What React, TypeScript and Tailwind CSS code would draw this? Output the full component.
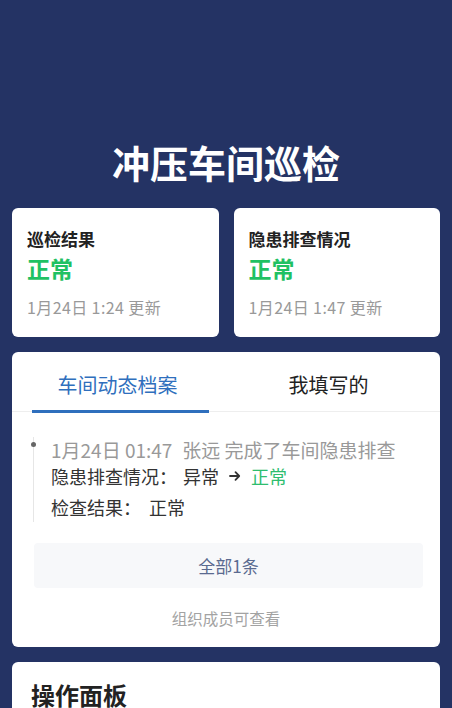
import React from 'react';

// 冲压车间巡检 — inspection overview page
const font = "font-['Noto_Sans_CJK_SC','Noto_Sans',sans-serif]";

function StatusCard({ title, time }: { title: string; time: string }) {
  return (
    <div className="h-[129px] rounded-[6px] bg-white pl-[15px] pt-[19px]">
      <div className="text-[17px] font-bold leading-[24px] text-[#222]">{title}</div>
      <div className="mt-[2px] text-[23px] font-bold leading-[30px] text-[#1fc163]">正常</div>
      <div className="mt-[12px] text-[16px] leading-[24px] tracking-[0.4px] text-[#999]">
        {time} 更新
      </div>
    </div>
  );
}

function Arrow() {
  return (
    <svg width="12" height="12" viewBox="0 0 12 12" className="mx-[10px] inline-block">
      <path d="M1 6h9M6.5 2.2 10.2 6 6.5 9.8" fill="none" stroke="#333" strokeWidth="1.8" strokeLinecap="round" strokeLinejoin="round" />
    </svg>
  );
}

export default function App() {
  return (
    <div className={`min-h-screen bg-[#243364] ${font}`}>
      <h1 className="pt-[140px] text-center text-[38px] font-bold leading-[44px] text-white">
        冲压车间巡检
      </h1>

      <div className="mt-[24px] grid grid-cols-2 gap-[15px] px-3">
        <StatusCard title="巡检结果" time="1月24日 1:24" />
        <StatusCard title="隐患排查情况" time="1月24日 1:47" />
      </div>

      <div className="mx-3 mt-[15px] h-[295px] rounded-[6px] bg-white">
        <div className="flex h-[60px] border-b border-[#eeeeee]">
          <div className="relative flex-1 pt-[19px] text-center text-[20px] leading-[28px] text-[#2f6fbd]">
            车间动态档案
            <div className="absolute bottom-[-2px] left-[20px] right-[14px] h-[3px] bg-[#2f6fbd]" />
          </div>
          <div className="flex-1 pt-[19px] pr-[6px] text-center text-[20px] leading-[28px] text-[#222]">
            我填写的
          </div>
        </div>

        <div className="pl-[21px] pt-[25px]">
          <div className="relative border-l border-[#e6e6e6] pb-[2px] pl-[17px]">
            <div className="absolute left-[-3px] top-[5px] h-[5px] w-[5px] rounded-full bg-[#666]" />
            <div className="text-[19px] leading-[26px] text-[#999]">
              1月24日 01:47<span className="ml-[10px]">张远 完成了车间隐患排查</span>
            </div>
            <div className="flex items-center text-[18px] leading-[26px] text-[#333]">
              <span>隐患排查情况：</span>
              <span className="ml-[6px]">异常</span>
              <Arrow />
              <span className="text-[#2ebd6e]">正常</span>
            </div>
            <div className="mt-[5px] text-[18px] leading-[26px] text-[#333]">
              检查结果：<span className="ml-[8px]">正常</span>
            </div>
          </div>
        </div>

        <div className="ml-[22px] mr-[17px] mt-[21px] flex h-[45px] items-center justify-center rounded-[4px] bg-[#f7f8fa] text-[17px] text-[#5a6a90]">
          全部1条
        </div>

        <div className="mt-[19px] text-center text-[15.5px] leading-[22px] text-[#a3a3a3]">
          组织成员可查看
        </div>
      </div>

      <div className="mx-3 mt-[15px] h-[100px] rounded-t-[6px] bg-white pl-[19px] pt-[17px]">
        <div className="text-[24px] font-bold leading-[32px] text-[#222]">操作面板</div>
      </div>
    </div>
  );
}
